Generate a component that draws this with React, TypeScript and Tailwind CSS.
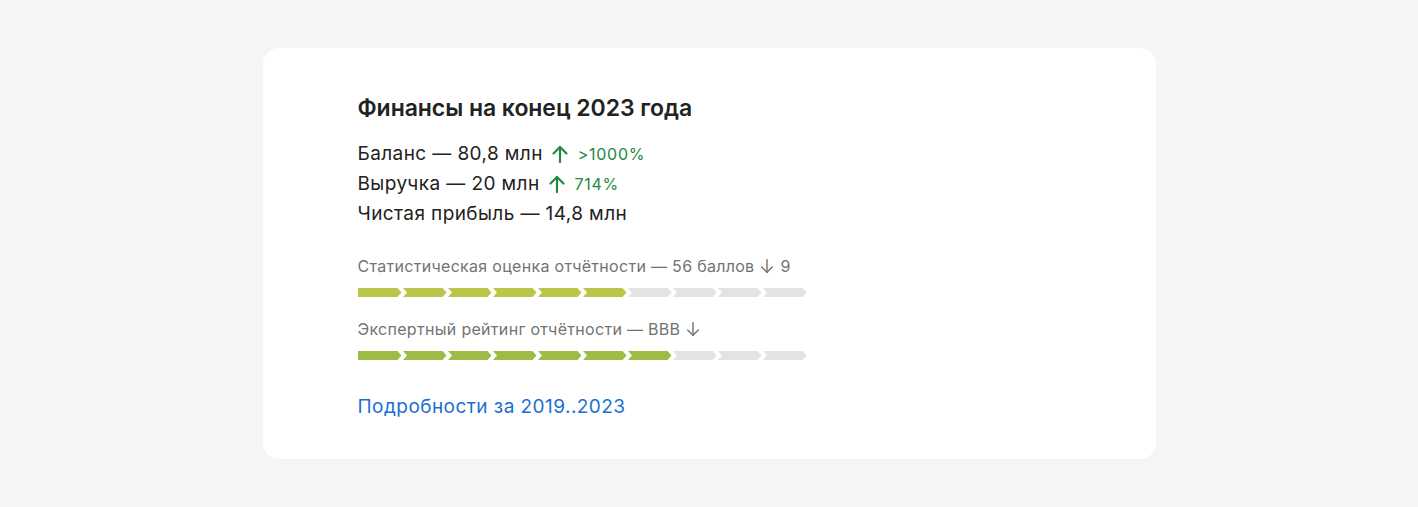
const SEG = 10

const ScoreBar = ({ filled, color }: { filled: number; color: string }) => {
    const w = 45
    const d = 4
    const h = 9
    return (
        <svg width={450} height={h} viewBox={`0 0 450 ${h}`} className="block">
            {Array.from({ length: SEG }).map((_, i) => {
                const x = i * w
                const r = x + w - 1.5
                const pts =
                    i === 0
                        ? `${x},0 ${r - d},0 ${r},${h / 2} ${r - d},${h} ${x},${h}`
                        : `${x},0 ${r - d},0 ${r},${h / 2} ${r - d},${h} ${x},${h} ${x + d},${h / 2}`
                return <polygon key={i} points={pts} fill={i < filled ? color : "#e3e3e3"} />
            })}
        </svg>
    )
}

const Arrow = ({ down, size, className }: { down?: boolean; size: number; className?: string }) => (
    <svg width={size} height={size} viewBox="0 0 18 18" fill="none" stroke="currentColor" strokeWidth={down ? 1.6 : 2.2} strokeLinecap="round" strokeLinejoin="round" className={className}>
        {down ? (
            <>
                <path d="M9 2v14" />
                <path d="M3 10l6 6 6-6" />
            </>
        ) : (
            <>
                <path d="M9 17V2" />
                <path d="M2.5 8.5L9 2l6.5 6.5" />
            </>
        )}
    </svg>
)

const App = () => {
    return (
        <div className="min-h-[507px] w-full bg-[#f5f5f5] pt-12 flex justify-center" style={{ fontFamily: "Inter, 'Noto Sans', sans-serif" }}>
            <div className="w-[893px] h-[411px] bg-white rounded-2xl pl-[95px] pt-[44px]">
                {/* Title */}
                <h2 className="text-[23px] leading-[32px] font-semibold text-[#222] tracking-[-0.05px]">
                    Финансы на конец 2023 года
                </h2>

                {/* Key figures */}
                <div className="mt-[15px] text-[19px] leading-[30px] text-[#222] tracking-[0.4px]">
                    <div className="flex items-center">
                        <span>Баланс — 80,8 млн</span>
                        <Arrow size={18} className="ml-[8px] text-[#1e8a3e]" />
                        <span className="ml-[9px] text-[16px] text-[#22893f] tracking-[0.7px]">&gt;1000%</span>
                    </div>
                    <div className="flex items-center">
                        <span>Выручка — 20 млн</span>
                        <Arrow size={18} className="ml-[8px] text-[#1e8a3e]" />
                        <span className="ml-[9px] text-[16px] text-[#22893f] tracking-[0.7px]">714%</span>
                    </div>
                    <div>Чистая прибыль — 14,8 млн</div>
                </div>

                {/* Ratings */}
                <div className="mt-[25px] flex items-center text-[16px] leading-[24px] text-[#737373] tracking-[0.3px]">
                    <span>Статистическая оценка отчётности — 56 баллов</span>
                    <Arrow down size={16} className="ml-[5px]" />
                    <span className="ml-[5px]">9</span>
                </div>
                <div className="mt-[10px]">
                    <ScoreBar filled={6} color="#b9c64a" />
                </div>

                <div className="mt-[20px] flex items-center text-[16px] leading-[24px] text-[#737373] tracking-[0.3px]">
                    <span>Экспертный рейтинг отчётности — BBB</span>
                    <Arrow down size={16} className="ml-[5px]" />
                </div>
                <div className="mt-[10px]">
                    <ScoreBar filled={7} color="#9dbc45" />
                </div>

                {/* Link */}
                <a className="mt-[33px] block text-[19px] leading-[28px] text-[#1a6fd1] tracking-[0.45px]">
                    Подробности за 2019..2023
                </a>
            </div>
        </div>
    )
}

export default App
